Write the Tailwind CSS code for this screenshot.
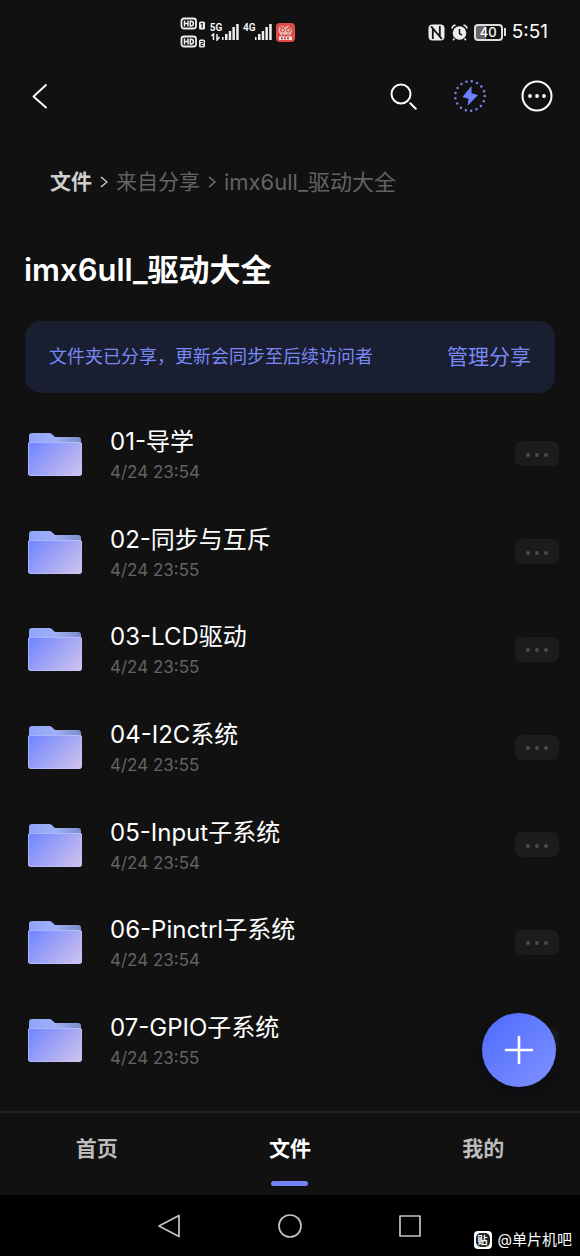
<!DOCTYPE html>
<html lang="zh-CN">
<head>
<meta charset="utf-8">
<meta name="viewport" content="width=device-width, initial-scale=1">
<title>imx6ull_驱动大全</title>
<script src="https://cdn.jsdelivr.net/npm/@tailwindcss/browser@4"></script>
</head>
<body class="min-h-screen flex flex-col bg-[#111111] text-white font-['Inter','Noto_Sans_CJK_SC',sans-serif]">

<svg class="absolute size-0" aria-hidden="true">
  <defs>
    <linearGradient id="folderFront" x1="0" y1="0.2" x2="1" y2="0.8">
      <stop offset="0" stop-color="#7488ff"/><stop offset="0.45" stop-color="#9ba1f6"/><stop offset="1" stop-color="#cabfee"/>
    </linearGradient>
    <linearGradient id="folderBack" x1="0" y1="0" x2="1" y2="0">
      <stop offset="0" stop-color="#8fa4fb"/><stop offset="0.5" stop-color="#9fb0f6"/><stop offset="1" stop-color="#7c8dcb"/>
    </linearGradient>
  </defs>
</svg>

<!-- Status bar -->
<div class="h-16 shrink-0 flex items-center justify-between pl-[180px] pr-8">
  <div class="flex items-center gap-1">
    <svg class="w-[26px] h-8" viewBox="0 0 26 32" fill="none" stroke="#eee" stroke-width="1.8" aria-hidden="true">
      <rect x="1.500" y="2.500" width="14.500" height="10" rx="2.500"/>
      <path d="M4.500 4.500v6M8 4.500v6M4.500 7.500H8M10.300 5.200v4.700h.8c1.500 0 2.300-1 2.300-2.400s-.8-2.300-2.300-2.300z" stroke-width="1.500"/>
      <rect x="19" y="5.500" width="6" height="8" rx="1.500" fill="#eee" stroke="none"/><path d="M20.800 7.600h1.400v4.400" stroke="#111" stroke-width="1.100"/>
      <rect x="1.500" y="20.500" width="14.500" height="10" rx="2.500"/>
      <path d="M4.500 22.500v6M8 22.500v6M4.500 25.500H8M10.300 23.200v4.700h.8c1.500 0 2.300-1 2.300-2.400s-.8-2.300-2.300-2.300z" stroke-width="1.500"/>
      <rect x="19" y="23.500" width="6" height="8" rx="1.500" fill="#eee" stroke="none"/><path d="M20.500 25.500h2.700v2h-2.200v2.200h2.500" stroke="#111" stroke-width="1"/>
    </svg>
    <div class="flex items-end">
      <div class="flex flex-col items-center w-3">
        <span class="text-[10px] leading-[10px] font-semibold font-['Roboto',sans-serif]">5G</span>
        <svg class="w-3 h-2" viewBox="0 0 12 8" fill="none" stroke="#eee" stroke-width="1.500" aria-hidden="true"><path d="M1.500 3l2-2v6M7 1v6l2.500-3"/></svg>
      </div>
      <svg class="w-[17px] h-[18px]" viewBox="0 0 17 18" fill="#eee" aria-hidden="true"><rect x="-1" y="14" width="2.500" height="3"/><rect x="3" y="11" width="2.500" height="6"/><rect x="6.700" y="8" width="2.500" height="9"/><rect x="10.400" y="4" width="2.500" height="13"/><rect x="14.200" y="1" width="2.500" height="16"/></svg>
    </div>
    <div class="flex items-start">
      <span class="w-3 text-[10px] leading-[10px] font-semibold font-['Roboto',sans-serif]">4G</span>
      <svg class="w-[17px] h-[18px]" viewBox="0 0 17 18" fill="#eee" aria-hidden="true"><rect x="-1" y="14" width="2.500" height="3"/><rect x="3" y="11" width="2.500" height="6"/><rect x="6.700" y="8" width="2.500" height="9"/><rect x="10.400" y="4" width="2.500" height="13"/><rect x="14.200" y="1" width="2.500" height="16"/></svg>
    </div>
    <svg class="size-[19px]" viewBox="0 0 19 19" fill="none" aria-hidden="true">
      <rect width="19" height="19" rx="4" fill="#df4b48"/>
      <path d="M3 4.500l3-2 3 2 3-2 3 2 1 4-2 4H5L2.500 9z" fill="#f2b6ac"/>
      <circle cx="6.500" cy="7" r="2" stroke="#b9403d"/><circle cx="12.500" cy="7" r="2" stroke="#b9403d"/>
      <path d="M6 11.500q3.500 2 7 0M4 4l3 .5M12 4.500L15 4" stroke="#b9403d"/>
      <path d="M3 13.500h13v3.500H3z" fill="#f6e6e2"/><path d="M5 15.300h9" stroke="#c23431" stroke-width="1.700" stroke-dasharray="2 1"/>
    </svg>
  </div>
  <div class="flex items-center gap-[6px]">
    <svg class="size-[17px]" viewBox="0 0 17 17" aria-hidden="true"><rect x=".5" y=".5" width="16" height="16" rx="4" fill="#eee"/><path d="M4.800 15V4.500l7 8V2M4.800 4.500L3 2.500M11.800 12.500l2 2.300" fill="none" stroke="#111" stroke-width="1.800"/></svg>
    <svg class="size-[17px]" viewBox="0 0 17 17" aria-hidden="true"><circle cx="8.500" cy="9" r="6.800" fill="#eee"/><path d="M8.500 5v4.500l2.500 1.700" fill="none" stroke="#111" stroke-width="1.500"/><path d="M.8 4.500Q1.500 1.500 4.500.9M16.200 4.500Q15.500 1.500 12.500.9M3.500 14.500L2 16.300M13.500 14.500l1.500 1.800" fill="none" stroke="#eee" stroke-width="1.500"/></svg>
    <div class="flex items-center gap-px">
      <div class="w-[29px] h-[17px] rounded-[4px] border-2 border-[#ddd] bg-linear-to-r from-[#666] from-40% to-[#111] to-40% flex items-center justify-center text-[13px] leading-none font-medium">40</div>
      <div class="w-[2px] h-2 bg-[#ddd]"></div>
    </div>
    <span class="text-[19px] leading-6">5:51</span>
  </div>
</div>

<!-- Toolbar -->
<header class="h-16 shrink-0 flex items-center justify-between pl-6 pr-[27px]">
  <button type="button" aria-label="返回" class="size-8 flex items-center justify-center">
    <svg class="size-8" viewBox="0 0 32 32" fill="none" stroke="#fff" stroke-width="1.900" stroke-linecap="round" stroke-linejoin="round"><path d="M22 5L9.500 16.500 22 27.500"/></svg>
  </button>
  <div class="flex items-center gap-[35px]">
    <button type="button" aria-label="搜索" class="size-8">
      <svg class="size-8" viewBox="0 0 32 32" fill="none" stroke="#fff" stroke-width="2" stroke-linecap="round"><circle cx="14" cy="14" r="9.500"/><path d="M23.300 23.300l5.500 5.500"/></svg>
    </button>
    <button type="button" aria-label="快速传输" class="size-8">
      <svg class="size-8" viewBox="0 0 32 32" fill="none"><circle cx="16" cy="16" r="14.800" stroke="#7784e6" stroke-width="2.500" stroke-linecap="round" stroke-dasharray="0 5.470"/><path d="M17.500 6L8.500 17l6 1.700-.8 7L24 15l-6.500-1.800z" fill="#6a82ff"/></svg>
    </button>
    <button type="button" aria-label="更多" class="size-8">
      <svg class="size-8" viewBox="0 0 32 32"><circle cx="16" cy="16" r="14.500" fill="none" stroke="#fff" stroke-width="2"/><g fill="#fff"><circle cx="9" cy="16" r="1.900"/><circle cx="16" cy="16" r="1.900"/><circle cx="23" cy="16" r="1.900"/></g></svg>
    </button>
  </div>
</header>

<main class="relative flex-1 flex flex-col pt-[17px] pb-[22px]">
  <nav aria-label="路径" class="mx-[25px] h-[73px] shrink-0 rounded-2xl border border-[#0e0e0e] px-6 flex items-center gap-2 text-[22px] leading-8 text-[#636363]">
    <a href="#" class="text-[21px] font-bold text-[#cfcfcf]">文件</a>
    <svg class="w-2 h-3" viewBox="0 0 8 12" fill="none" stroke="#cfcfcf" stroke-width="1.400" aria-hidden="true"><path d="M1 1l6 5-6 5"/></svg>
    <a href="#" class="text-[21px]">来自分享</a>
    <svg class="w-2 h-3" viewBox="0 0 8 12" fill="none" stroke="#777" stroke-width="1.400" aria-hidden="true"><path d="M1 1l6 5-6 5"/></svg>
    <a href="#">imx6ull_驱动大全</a>
  </nav>

  <h1 class="mx-6 mt-8 mb-[31px] text-[31px] leading-10 font-semibold">imx6ull_驱动大全</h1>

  <section class="mx-[25px] h-[72px] shrink-0 rounded-2xl bg-[#1a1e31] px-6 flex items-center justify-between text-[#7888f4]">
    <p class="text-[18px] leading-6">文件夹已分享，更新会同步至后续访问者</p>
    <button type="button" class="text-[21px] leading-8">管理分享</button>
  </section>

  <ul id="files" class="flex-1 mt-3 flex flex-col"></ul>

  <button type="button" aria-label="新建" class="absolute right-6 bottom-6 size-[74px] rounded-full bg-linear-to-br from-[#4d68ff] to-[#8092ff] shadow-[0_6px_12px_#0b0c14] flex items-center justify-center">
    <svg class="size-8" viewBox="0 0 32 32" stroke="#fff" stroke-width="2.600" stroke-linecap="round"><path d="M16 3v26M3 16h26"/></svg>
  </button>
</main>

<!-- Tabs -->
<nav aria-label="主导航" class="h-[84px] shrink-0 border-t-2 border-[#222] grid grid-cols-3 text-[21px] leading-8 font-bold text-[#bcbcbc]">
  <a href="#" class="flex flex-col items-center pt-5">首页</a>
  <a href="#" aria-current="page" class="flex flex-col items-center justify-between pt-5 pb-[9px] text-white">文件<span class="w-[37px] h-[5px] rounded-full bg-[#7484f6]"></span></a>
  <a href="#" class="flex flex-col items-center pt-5">我的</a>
</nav>

<!-- System navigation -->
<footer class="relative h-[61px] shrink-0 bg-black flex items-center justify-center gap-24">
  <button type="button" aria-label="系统返回" class="size-6"><svg class="size-6" viewBox="0 0 24 24" fill="none" stroke="#c4c4c4" stroke-width="1.700" stroke-linejoin="round"><path d="M21 1.500v21L1 12z"/></svg></button>
  <button type="button" aria-label="主屏幕" class="size-6"><svg class="size-6" viewBox="0 0 24 24" fill="none" stroke="#c4c4c4" stroke-width="1.700"><circle cx="12" cy="12" r="11"/></svg></button>
  <button type="button" aria-label="最近任务" class="size-6"><svg class="size-6" viewBox="0 0 24 24" fill="none" stroke="#c4c4c4" stroke-width="1.700" stroke-linejoin="round"><rect x="2" y="2" width="20" height="20"/></svg></button>
  <div class="absolute right-2 bottom-1 flex items-center gap-[6px] text-[15px] leading-6">
    <span class="size-[18px] rounded-[4px] bg-white flex items-center justify-center"><span class="size-[14px] rounded-[5px] bg-[#222] text-[10px] leading-[14px] text-center font-bold">贴</span></span>
    <span>@单片机吧</span>
  </div>
</footer>

<template id="fileRow">
  <li class="flex-1 flex items-center pl-7 pr-[21px]">
    <svg class="w-[54px] h-11 shrink-0" viewBox="0 0 54 44" aria-hidden="true">
      <path d="M1 4a3 3 0 0 1 3-3h17c1.500 0 2.300.5 3.300 1.500l1 1C26.300 4.500 27 5 28.500 5H50a3 3 0 0 1 3 3v14H1z" fill="url(#folderBack)"/>
      <path d="M0 12a2 2 0 0 1 2-2h50a2 2 0 0 1 2 2v29a3 3 0 0 1-3 3H3a3 3 0 0 1-3-3z" fill="url(#folderFront)"/>
      <path d="M.5 12a1.500 1.500 0 0 1 1.500-1.500h50a1.500 1.500 0 0 1 1.500 1.500v29a2.500 2.500 0 0 1-2.500 2.500H3A2.500 2.500 0 0 1 .5 41z" fill="none" stroke="#c5ccff" stroke-opacity=".6"/>
    </svg>
    <div class="ml-7 flex-1 min-w-0">
      <a href="#" class="name block text-[24px] leading-9"></a>
      <p class="date text-[17px] leading-6 text-[#636363]"></p>
    </div>
    <button type="button" class="more w-11 h-[25px] rounded-[7px] bg-[#1c1c1c] flex items-center justify-center">
      <svg class="w-6 h-[6px]" viewBox="0 0 24 6" fill="#4b4b4b" aria-hidden="true"><circle cx="3" cy="4" r="2"/><circle cx="12" cy="4" r="2"/><circle cx="21" cy="4" r="2"/></svg>
    </button>
  </li>
</template>
<script>
  const files = [
    ["01-导学", "4/24 23:54"],
    ["02-同步与互斥", "4/24 23:55"],
    ["03-LCD驱动", "4/24 23:55"],
    ["04-I2C系统", "4/24 23:55"],
    ["05-Input子系统", "4/24 23:54"],
    ["06-Pinctrl子系统", "4/24 23:54"],
    ["07-GPIO子系统", "4/24 23:55"]
  ];
  const list = document.getElementById("files");
  const row = document.getElementById("fileRow");
  for (const [name, date] of files) {
    const item = row.content.cloneNode(true);
    item.querySelector(".name").textContent = name;
    item.querySelector(".date").textContent = date;
    item.querySelector(".more").setAttribute("aria-label", name + " 更多操作");
    list.append(item);
  }
</script>
</body>
</html>
